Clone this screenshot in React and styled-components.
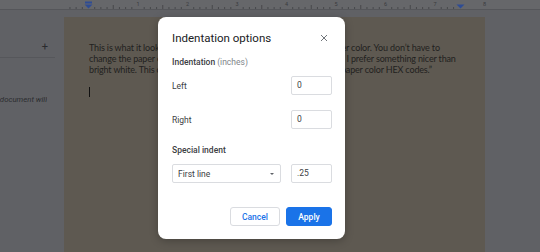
import React from "react"
import styled, { createGlobalStyle } from "styled-components"

const INCH = 49.5
const ORIGIN = 88.5

const GlobalStyle = createGlobalStyle`
    body {
        margin: 0;
        background: #606165;
        overflow: hidden;
    }
`

function Ruler() {
    let ticks = []
    for (let i = -3; i <= 59; i++) {
        let x = ORIGIN + i * INCH / 8
        if (x < 64 || x > 485) continue
        if (i % 8 === 0) continue
        let h = i % 4 === 0 ? 4 : 2
        ticks.push(<line key={i} x1={x} x2={x} y1={9 - h} y2={9} stroke="#3a3b3e" strokeWidth="0.7" />)
    }
    let nums = [1, 2, 3, 4, 5, 6, 7, 8]
    return (
        <svg width="540" height="10" viewBox="0 0 540 10">
            {ticks}
            {nums.map(n => (
                <text key={n} x={ORIGIN + n * INCH} y="5.5" fontSize="5.5" fill="#3a3b3e"
                    textAnchor="middle" fontFamily="Roboto, sans-serif">{n}</text>
            ))}
            <rect x="85" y="1.5" width="7" height="2" fill="#2e4c94" />
            <path d="M84.5 4.5 L92.5 4.5 L88.5 8.5 Z" fill="#2e4c94" />
            <path d="M456.5 4.5 L464.5 4.5 L460.5 8.5 Z" fill="#2e4c94" />
        </svg>
    )
}

export default function App() {
    return (
        <Screen>
            <GlobalStyle />
            <RulerBar>
                <Ruler />
            </RulerBar>
            <Workspace>
                <Outline>
                    <OutlineHead>+</OutlineHead>
                    <OutlineNote>Headings you add to the document will</OutlineNote>
                </Outline>
                <Paper>
                    <Line>This is what it looks like when you choose a different and nicer paper color. You don’t have to</Line>
                    <Line>change the paper color at all if you don’t like, but personally though, I prefer something nicer than</Line>
                    <Line>bright white. This chart shows a few of the best and most pleasing paper color HEX codes.”</Line>
                    <Caret />
                </Paper>
                <Side />
            </Workspace>

            <Dialog>
                <Header>
                    <Title>Indentation options</Title>
                    <Close>
                        <svg width="8" height="8" viewBox="0 0 8 8">
                            <path d="M1 1 L7 7 M7 1 L1 7" stroke="#70757a" strokeWidth="1" />
                        </svg>
                    </Close>
                </Header>
                <Section>
                    <span>Indentation</span>
                    <Muted>(inches)</Muted>
                </Section>
                <Row>
                    <Label>Left</Label>
                    <Field>0</Field>
                </Row>
                <Row gap="15px">
                    <Label>Right</Label>
                    <Field>0</Field>
                </Row>
                <Section top="16px">Special indent</Section>
                <Row>
                    <Select>
                        <span>First line</span>
                        <Arrow />
                    </Select>
                    <Field>.25</Field>
                </Row>
                <Buttons>
                    <Button>Cancel</Button>
                    <Button primary>Apply</Button>
                </Buttons>
            </Dialog>
        </Screen>
    )
}

const Screen = styled.div`
    position: relative;
    width: 540px;
    height: 252px;
    overflow: hidden;
    background: #606165;
    font-family: Roboto, "Liberation Sans", sans-serif;
`
const RulerBar = styled.div`
    height: 9px;
    background: #66676a;
    border-bottom: 1px solid #55565a;
    overflow: hidden;
    svg {
        display: block;
    }
`
const Workspace = styled.div`
    display: grid;
    grid-template-columns: 64px 421px 1fr;
    height: 242px;
    padding-top: 7px;
    box-sizing: border-box;
`
const Outline = styled.div`
    display: flex;
    flex-direction: column;
    padding-top: 24px;
`
const OutlineHead = styled.div`
    display: flex;
    justify-content: flex-end;
    width: 55px;
    padding-right: 7px;
    box-sizing: border-box;
    height: 17px;
    font-size: 11px;
    line-height: 11px;
    color: #2a2b2e;
    border-bottom: 1px solid #56575b;
`
const OutlineNote = styled.div`
    display: flex;
    justify-content: flex-end;
    width: 47px;
    margin-top: 37px;
    white-space: nowrap;
    font-size: 7.8px;
    line-height: 9px;
    font-style: italic;
    color: #2c2d30;
    overflow: hidden;
`
const Paper = styled.div`
    background: #5e5951;
    padding: 25px 0 0 25px;
    font-family: Lato, "Liberation Sans", sans-serif;
    overflow: hidden;
`
const Line = styled.div`
    font-size: 9px;
    letter-spacing: -0.15px;
    line-height: 11px;
    white-space: nowrap;
    color: #222120;
`
const Caret = styled.div`
    width: 1px;
    height: 10px;
    margin-top: 12px;
    background: #111;
`
const Side = styled.div`
    background: #606165;
`
const Dialog = styled.div`
    position: absolute;
    left: 158px;
    top: 17px;
    width: 187px;
    box-sizing: border-box;
    padding: 12px 13px 13px 14px;
    background: #fff;
    border-radius: 8px;
    box-shadow: 0 2px 8px rgba(0, 0, 0, 0.25);
    display: flex;
    flex-direction: column;
`
const Header = styled.div`
    display: flex;
    align-items: center;
    justify-content: space-between;
    height: 18px;
`
const Title = styled.div`
    font-size: 11.5px;
    color: #202124;
`
const Close = styled.div`
    display: flex;
    margin-right: 4px;
`
const Section = styled.div`
    display: flex;
    gap: 2px;
    margin-top: ${p => p.top || "10px"};
    font-size: 8.5px;
    line-height: 10px;
    font-weight: 500;
    color: #3c4043;
`
const Muted = styled.span`
    font-weight: 400;
    color: #80868b;
`
const Row = styled.div`
    display: flex;
    align-items: center;
    justify-content: space-between;
    gap: 10px;
    margin-top: ${p => p.gap || "9px"};
    height: 19px;
`
const Label = styled.div`
    font-size: 8.5px;
    color: #3c4043;
`
const Field = styled.div`
    width: 41px;
    height: 19px;
    box-sizing: border-box;
    border: 1px solid #dadce0;
    border-radius: 2px;
    padding-left: 5px;
    font-size: 8.5px;
    line-height: 17px;
    color: #3c4043;
`
const Select = styled.div`
    flex: 1;
    height: 19px;
    box-sizing: border-box;
    border: 1px solid #dadce0;
    border-radius: 2px;
    display: flex;
    align-items: center;
    justify-content: space-between;
    padding: 0 6px 0 5px;
    font-size: 8.5px;
    color: #3c4043;
`
const Arrow = styled.span`
    width: 0;
    height: 0;
    border-left: 2.5px solid transparent;
    border-right: 2.5px solid transparent;
    border-top: 2.5px solid #5f6368;
`
const Buttons = styled.div`
    display: flex;
    justify-content: flex-end;
    gap: 6px;
    margin-top: 24px;
`
const Button = styled.div`
    height: 19px;
    width: ${p => p.primary ? "46px" : "50px"};
    box-sizing: border-box;
    border-radius: 3px;
    border: 1px solid ${p => p.primary ? "#1a73e8" : "#dadce0"};
    background: ${p => p.primary ? "#1a73e8" : "#fff"};
    color: ${p => p.primary ? "#fff" : "#1a73e8"};
    font-size: 8.5px;
    font-weight: 500;
    display: flex;
    align-items: center;
    justify-content: center;
`
